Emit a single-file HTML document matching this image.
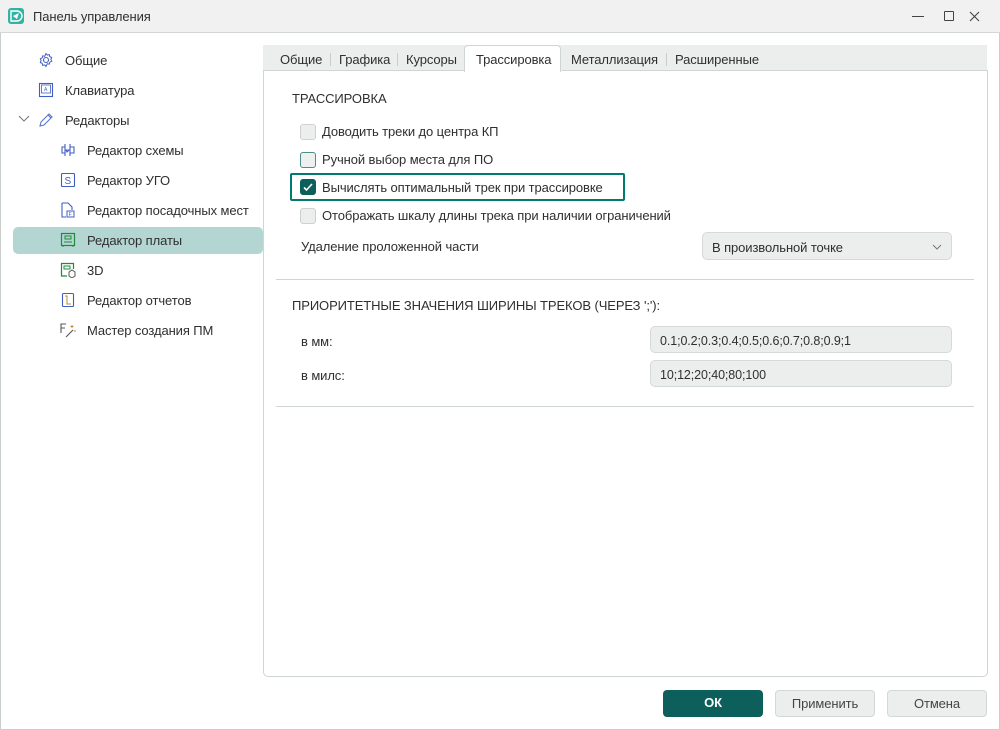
<!DOCTYPE html>
<html><head><meta charset="utf-8"><style>
*{margin:0;padding:0;box-sizing:border-box}
body{width:1000px;height:730px;background:#fff;font-family:"Liberation Sans",sans-serif;font-size:13px;letter-spacing:-0.1px;color:#2f2f2f;position:relative;overflow:hidden}
.abs{position:absolute}
.win{position:absolute;left:0;top:0;width:1000px;height:730px;border:1px solid #c9cfcd}
.title{position:absolute;left:0;top:0;width:1000px;height:33px;background:#f0f1f0;border-bottom:1px solid #d2d6d4}
.nav{position:absolute;white-space:nowrap}
.ico{position:absolute}
.tabs{position:absolute;left:263px;top:45px;width:724px;height:26px;background:#eceeed}
.tab{position:absolute;top:7px;white-space:nowrap}
.sep{position:absolute;top:8px;width:1px;height:13px;background:#c9cdcb}
.panel{position:absolute;left:263px;top:70px;width:725px;height:607px;border:1px solid #cfd5d3;border-top:none;border-radius:0 0 5px 5px}
.cb{position:absolute;width:16px;height:16px;border:1px solid #cdd2d0;background:#eceeed;border-radius:3px}
.lbl{position:absolute;white-space:nowrap}
.field{position:absolute;left:650px;width:302px;height:27px;background:#eceeed;border:1px solid #d5dad8;border-radius:5px;padding:7px 0 0 9px;font-size:12.5px}
.hr{position:absolute;left:276px;width:698px;height:1px;background:#cfd5d3}
.btn{position:absolute;top:690px;height:27px;border-radius:4px;text-align:center;line-height:26px}
</style></head><body>
<div class="win"></div>
<div class="title">
 <svg class="ico" style="left:8px;top:8px" width="16" height="16" viewBox="0 0 16 16"><rect x="0" y="0" width="16" height="16" rx="3" fill="#34b3a3"/><path d="M3 3h6a5 5 0 0 1 0 10H3z" fill="none" stroke="#fff" stroke-width="1.4"/><path d="M5 8l6-3-2 6z" fill="#fff"/></svg>
 <div class="abs" style="left:33px;top:9px">Панель управления</div>
 <div class="abs" style="left:912px;top:16px;width:12px;height:1px;background:#444"></div>
 <div class="abs" style="left:944px;top:11px;width:10px;height:10px;border:1px solid #444;border-radius:1px"></div>
 <svg class="ico" style="left:969px;top:11px" width="11" height="11" viewBox="0 0 11 11"><path d="M1 1l9 9M10 1l-9 9" stroke="#444" stroke-width="1.1"/></svg>
</div>

<div class="abs" style="left:13px;top:227px;width:250px;height:27px;background:#b3d6d3;border-radius:5px"></div>
<svg class="ico" style="left:38px;top:52px" width="16" height="16" viewBox="0 0 16 16"><circle cx="8" cy="8" r="2.5" fill="none" stroke="#3f5fc4" stroke-width="1.1"/><path d="M8 1.5l1.3 1.6 2-.5.5 2 1.9.9-.8 1.9.8 1.9-1.9.9-.5 2-2-.5L8 14.5 6.7 12.9l-2 .5-.5-2-1.9-.9.8-1.9-.8-1.9 1.9-.9.5-2 2 .5z" fill="none" stroke="#3f5fc4" stroke-width="1"/></svg>
<div class="nav" style="left:65px;top:53px">Общие</div>
<svg class="ico" style="left:38px;top:82px" width="16" height="16" viewBox="0 0 16 16"><rect x="1.5" y="1.5" width="13" height="13" fill="none" stroke="#3f5fc4" stroke-width="1.1"/><rect x="3.5" y="3" width="9" height="8" fill="none" stroke="#3f5fc4" stroke-width=".8"/><text x="6" y="9" font-size="5" fill="#3f5fc4" font-family="Liberation Sans">A</text></svg>
<div class="nav" style="left:65px;top:83px">Клавиатура</div>
<svg class="ico" style="left:18px;top:115px" width="12" height="8" viewBox="0 0 12 8"><path d="M1 1l5 5 5-5" fill="none" stroke="#777" stroke-width="1"/></svg>
<svg class="ico" style="left:38px;top:112px" width="16" height="16" viewBox="0 0 16 16"><path d="M2 14l1-4 8-8 3 3-8 8z M10 3l3 3" fill="none" stroke="#5b74cf" stroke-width="1.1"/></svg>
<div class="nav" style="left:65px;top:113px">Редакторы</div>
<svg class="ico" style="left:60px;top:142px" width="16" height="16" viewBox="0 0 16 16"><path d="M5 2v12M10 2v12M5 5H2v6h3M10 5h4v6h-4M6 8h3l-2 2z" fill="none" stroke="#3f5fc4" stroke-width="1.1"/></svg>
<div class="nav" style="left:87px;top:143px">Редактор схемы</div>
<svg class="ico" style="left:60px;top:172px" width="16" height="16" viewBox="0 0 16 16"><rect x="1.5" y="1.5" width="13" height="13" rx="1" fill="none" stroke="#3f5fc4" stroke-width="1.1"/><text x="4.5" y="12" font-size="10" fill="#3f5fc4" font-family="Liberation Sans">S</text></svg>
<div class="nav" style="left:87px;top:173px">Редактор УГО</div>
<svg class="ico" style="left:60px;top:202px" width="16" height="16" viewBox="0 0 16 16"><path d="M2 1h6l4 4v3M2 1v14h4" fill="none" stroke="#3f5fc4" stroke-width="1.1"/><rect x="7" y="9" width="7" height="6" fill="none" stroke="#3f5fc4"/><text x="8.6" y="14" font-size="5" fill="#3f5fc4">F</text></svg>
<div class="nav" style="left:87px;top:203px">Редактор посадочных мест</div>
<svg class="ico" style="left:60px;top:232px" width="16" height="16" viewBox="0 0 16 16"><rect x="1.5" y="1.5" width="13" height="12" fill="none" stroke="#1f8a3a" stroke-width="1.2"/><path d="M5 4h6v3H5zM5 9v2M7 9v2M9 9v2M11 9v2M3 13v2M13 13v2" fill="none" stroke="#1f8a3a" stroke-width="1"/></svg>
<div class="nav" style="left:87px;top:233px">Редактор платы</div>
<svg class="ico" style="left:60px;top:262px" width="16" height="16" viewBox="0 0 16 16"><path d="M7 14H1.5V1.5h12V7" fill="none" stroke="#1f8a3a" stroke-width="1.2"/><path d="M4 4h6v3H4z" fill="none" stroke="#1f8a3a"/><path d="M9 10l3-2 3 2v4l-3 2-3-2z" fill="none" stroke="#555" stroke-width="1"/></svg>
<div class="nav" style="left:87px;top:263px">3D</div>
<svg class="ico" style="left:60px;top:292px" width="16" height="16" viewBox="0 0 16 16"><rect x="2.5" y="1.5" width="11" height="13" rx="1" fill="none" stroke="#3f5fc4" stroke-width="1.1"/><path d="M5 4h2v8h4" fill="none" stroke="#c28a2a" stroke-width="1"/></svg>
<div class="nav" style="left:87px;top:293px">Редактор отчетов</div>
<svg class="ico" style="left:60px;top:322px" width="16" height="16" viewBox="0 0 16 16"><path d="M6 2H1v9M1 6h4M6 15l7-7" fill="none" stroke="#555" stroke-width="1.1"/><path d="M12 3v3M10.5 4.5h3M14 9h2" stroke="#c28a2a" stroke-width=".9"/></svg>
<div class="nav" style="left:87px;top:323px">Мастер создания ПМ</div>

<div class="tabs">
 <div class="tab" style="left:17px">Общие</div><div class="sep" style="left:67px"></div>
 <div class="tab" style="left:76px">Графика</div><div class="sep" style="left:134px"></div>
 <div class="tab" style="left:143px">Курсоры</div>
 <div class="abs" style="left:201px;top:0;width:97px;height:27px;background:#fff;border:1px solid #cfd5d3;border-bottom:none;border-radius:4px 4px 0 0"></div>
 <div class="tab" style="left:213px">Трассировка</div>
 <div class="tab" style="left:308px">Металлизация</div><div class="sep" style="left:403px"></div>
 <div class="tab" style="left:412px">Расширенные</div>
</div>
<div class="panel"></div>
<div class="abs" style="left:263px;top:70px;width:202px;height:1px;background:#cfd5d3"></div>
<div class="abs" style="left:562px;top:70px;width:426px;height:1px;background:#cfd5d3"></div>

<div class="lbl" style="left:292px;top:91px">ТРАССИРОВКА</div>
<div class="cb" style="left:300px;top:124px"></div><div class="lbl" style="left:322px;top:124px">Доводить треки до центра КП</div>
<div class="cb" style="left:300px;top:152px;border-color:#4a8f88;background:#eef0ef"></div><div class="lbl" style="left:322px;top:152px">Ручной выбор места для ПО</div>
<div class="abs" style="left:290px;top:173px;width:335px;height:28px;border:2px solid #007a72;border-radius:2px"></div>
<div class="cb" style="left:300px;top:179px;background:#0d5f5b;border-color:#0d5f5b"><svg width="14" height="14" viewBox="0 0 14 14" style="position:absolute;left:0;top:0"><path d="M3 7.5l2.5 2.5L11 4" fill="none" stroke="#fff" stroke-width="1.6"/></svg></div>
<div class="lbl" style="left:322px;top:180px">Вычислять оптимальный трек при трассировке</div>
<div class="cb" style="left:300px;top:208px"></div><div class="lbl" style="left:322px;top:208px">Отображать шкалу длины трека при наличии ограничений</div>
<div class="lbl" style="left:301px;top:239px">Удаление проложенной части</div>
<div class="field" style="left:702px;top:232px;width:250px;height:28px;padding-top:7px;font-size:13px">В произвольной точке
 <svg style="position:absolute;right:9px;top:11px" width="10" height="6" viewBox="0 0 10 6"><path d="M1 1l4 4 4-4" fill="none" stroke="#777" stroke-width="1"/></svg></div>
<div class="hr" style="top:279px"></div>
<div class="lbl" style="left:292px;top:298px">ПРИОРИТЕТНЫЕ ЗНАЧЕНИЯ ШИРИНЫ ТРЕКОВ (ЧЕРЕЗ ';'):</div>
<div class="lbl" style="left:301px;top:334px">в мм:</div>
<div class="field" style="top:326px">0.1;0.2;0.3;0.4;0.5;0.6;0.7;0.8;0.9;1</div>
<div class="lbl" style="left:301px;top:368px">в милс:</div>
<div class="field" style="top:360px">10;12;20;40;80;100</div>
<div class="hr" style="top:406px"></div>

<div class="btn" style="left:663px;width:100px;background:#0d5f5b;color:#fff;font-weight:bold">ОК</div>
<div class="btn" style="left:775px;width:100px;background:#eceeed;border:1px solid #d3d8d6;color:#444">Применить</div>
<div class="btn" style="left:887px;width:100px;background:#eceeed;border:1px solid #d3d8d6;color:#444">Отмена</div>
</body></html>
